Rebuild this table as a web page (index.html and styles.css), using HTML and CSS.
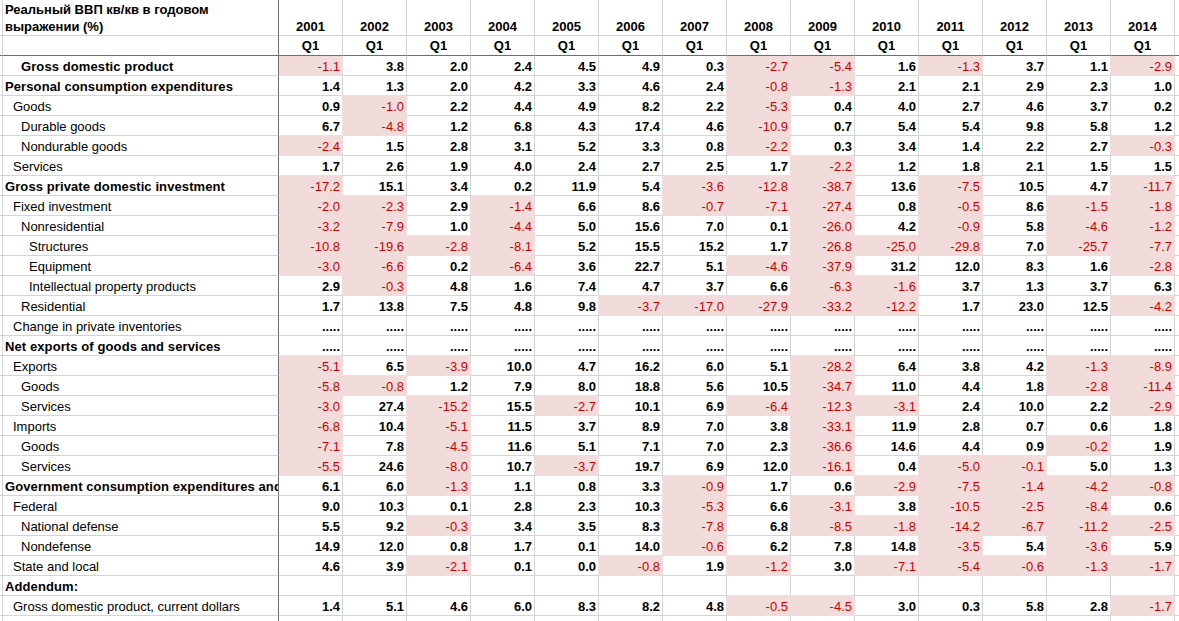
FILE: index.html
```html
<!DOCTYPE html>
<html lang="ru">
<head>
<meta charset="utf-8">
<title>Реальный ВВП</title>
<link rel="stylesheet" href="styles.css">
</head>
<body>
<table class="sheet">
<colgroup>
<col class="c-edge"><col class="c-label">
<col class="c-num"><col class="c-num"><col class="c-num"><col class="c-num"><col class="c-num"><col class="c-num"><col class="c-num">
<col class="c-num"><col class="c-num"><col class="c-num"><col class="c-num"><col class="c-num"><col class="c-num"><col class="c-num">
<col class="c-extra">
</colgroup>
<tr class="h1"><td class="e"></td><td class="l title">Реальный ВВП кв/кв в годовом<br>выражении (%)</td><td>2001</td><td>2002</td><td>2003</td><td>2004</td><td>2005</td><td>2006</td><td>2007</td><td>2008</td><td>2009</td><td>2010</td><td>2011</td><td>2012</td><td>2013</td><td>2014</td><td class="x"></td></tr>
<tr class="h2"><td class="e"></td><td class="l"></td><td>Q1</td><td>Q1</td><td>Q1</td><td>Q1</td><td>Q1</td><td>Q1</td><td>Q1</td><td>Q1</td><td>Q1</td><td>Q1</td><td>Q1</td><td>Q1</td><td>Q1</td><td>Q1</td><td class="x"></td></tr>
<tr class="first"><td class="e"></td><td class="l i2 b">Gross domestic product</td><td class="n">-1.1</td><td>3.8</td><td>2.0</td><td>2.4</td><td>4.5</td><td>4.9</td><td>0.3</td><td class="n">-2.7</td><td class="n">-5.4</td><td>1.6</td><td class="n">-1.3</td><td>3.7</td><td>1.1</td><td class="n">-2.9</td><td class="x"></td></tr>
<tr><td class="e"></td><td class="l i0 b">Personal consumption expenditures</td><td>1.4</td><td>1.3</td><td>2.0</td><td>4.2</td><td>3.3</td><td>4.6</td><td>2.4</td><td class="n">-0.8</td><td class="n">-1.3</td><td>2.1</td><td>2.1</td><td>2.9</td><td>2.3</td><td>1.0</td><td class="x"></td></tr>
<tr><td class="e"></td><td class="l i1">Goods</td><td>0.9</td><td class="n">-1.0</td><td>2.2</td><td>4.4</td><td>4.9</td><td>8.2</td><td>2.2</td><td class="n">-5.3</td><td>0.4</td><td>4.0</td><td>2.7</td><td>4.6</td><td>3.7</td><td>0.2</td><td class="x"></td></tr>
<tr><td class="e"></td><td class="l i2">Durable goods</td><td>6.7</td><td class="n">-4.8</td><td>1.2</td><td>6.8</td><td>4.3</td><td>17.4</td><td>4.6</td><td class="n">-10.9</td><td>0.7</td><td>5.4</td><td>5.4</td><td>9.8</td><td>5.8</td><td>1.2</td><td class="x"></td></tr>
<tr><td class="e"></td><td class="l i2">Nondurable goods</td><td class="n">-2.4</td><td>1.5</td><td>2.8</td><td>3.1</td><td>5.2</td><td>3.3</td><td>0.8</td><td class="n">-2.2</td><td>0.3</td><td>3.4</td><td>1.4</td><td>2.2</td><td>2.7</td><td class="n">-0.3</td><td class="x"></td></tr>
<tr><td class="e"></td><td class="l i1">Services</td><td>1.7</td><td>2.6</td><td>1.9</td><td>4.0</td><td>2.4</td><td>2.7</td><td>2.5</td><td>1.7</td><td class="n">-2.2</td><td>1.2</td><td>1.8</td><td>2.1</td><td>1.5</td><td>1.5</td><td class="x"></td></tr>
<tr><td class="e"></td><td class="l i0 b">Gross private domestic investment</td><td class="n">-17.2</td><td>15.1</td><td>3.4</td><td>0.2</td><td>11.9</td><td>5.4</td><td class="n">-3.6</td><td class="n">-12.8</td><td class="n">-38.7</td><td>13.6</td><td class="n">-7.5</td><td>10.5</td><td>4.7</td><td class="n">-11.7</td><td class="x"></td></tr>
<tr><td class="e"></td><td class="l i1">Fixed investment</td><td class="n">-2.0</td><td class="n">-2.3</td><td>2.9</td><td class="n">-1.4</td><td>6.6</td><td>8.6</td><td class="n">-0.7</td><td class="n">-7.1</td><td class="n">-27.4</td><td>0.8</td><td class="n">-0.5</td><td>8.6</td><td class="n">-1.5</td><td class="n">-1.8</td><td class="x"></td></tr>
<tr><td class="e"></td><td class="l i2">Nonresidential</td><td class="n">-3.2</td><td class="n">-7.9</td><td>1.0</td><td class="n">-4.4</td><td>5.0</td><td>15.6</td><td>7.0</td><td>0.1</td><td class="n">-26.0</td><td>4.2</td><td class="n">-0.9</td><td>5.8</td><td class="n">-4.6</td><td class="n">-1.2</td><td class="x"></td></tr>
<tr><td class="e"></td><td class="l i3">Structures</td><td class="n">-10.8</td><td class="n">-19.6</td><td class="n">-2.8</td><td class="n">-8.1</td><td>5.2</td><td>15.5</td><td>15.2</td><td>1.7</td><td class="n">-26.8</td><td class="n">-25.0</td><td class="n">-29.8</td><td>7.0</td><td class="n">-25.7</td><td class="n">-7.7</td><td class="x"></td></tr>
<tr><td class="e"></td><td class="l i3">Equipment</td><td class="n">-3.0</td><td class="n">-6.6</td><td>0.2</td><td class="n">-6.4</td><td>3.6</td><td>22.7</td><td>5.1</td><td class="n">-4.6</td><td class="n">-37.9</td><td>31.2</td><td>12.0</td><td>8.3</td><td>1.6</td><td class="n">-2.8</td><td class="x"></td></tr>
<tr><td class="e"></td><td class="l i3">Intellectual property products</td><td>2.9</td><td class="n">-0.3</td><td>4.8</td><td>1.6</td><td>7.4</td><td>4.7</td><td>3.7</td><td>6.6</td><td class="n">-6.3</td><td class="n">-1.6</td><td>3.7</td><td>1.3</td><td>3.7</td><td>6.3</td><td class="x"></td></tr>
<tr><td class="e"></td><td class="l i2">Residential</td><td>1.7</td><td>13.8</td><td>7.5</td><td>4.8</td><td>9.8</td><td class="n">-3.7</td><td class="n">-17.0</td><td class="n">-27.9</td><td class="n">-33.2</td><td class="n">-12.2</td><td>1.7</td><td>23.0</td><td>12.5</td><td class="n">-4.2</td><td class="x"></td></tr>
<tr><td class="e"></td><td class="l i1">Change in private inventories</td><td>.....</td><td>.....</td><td>.....</td><td>.....</td><td>.....</td><td>.....</td><td>.....</td><td>.....</td><td>.....</td><td>.....</td><td>.....</td><td>.....</td><td>.....</td><td>.....</td><td class="x"></td></tr>
<tr><td class="e"></td><td class="l i0 b">Net exports of goods and services</td><td>.....</td><td>.....</td><td>.....</td><td>.....</td><td>.....</td><td>.....</td><td>.....</td><td>.....</td><td>.....</td><td>.....</td><td>.....</td><td>.....</td><td>.....</td><td>.....</td><td class="x"></td></tr>
<tr><td class="e"></td><td class="l i1">Exports</td><td class="n">-5.1</td><td>6.5</td><td class="n">-3.9</td><td>10.0</td><td>4.7</td><td>16.2</td><td>6.0</td><td>5.1</td><td class="n">-28.2</td><td>6.4</td><td>3.8</td><td>4.2</td><td class="n">-1.3</td><td class="n">-8.9</td><td class="x"></td></tr>
<tr><td class="e"></td><td class="l i2">Goods</td><td class="n">-5.8</td><td class="n">-0.8</td><td>1.2</td><td>7.9</td><td>8.0</td><td>18.8</td><td>5.6</td><td>10.5</td><td class="n">-34.7</td><td>11.0</td><td>4.4</td><td>1.8</td><td class="n">-2.8</td><td class="n">-11.4</td><td class="x"></td></tr>
<tr><td class="e"></td><td class="l i2">Services</td><td class="n">-3.0</td><td>27.4</td><td class="n">-15.2</td><td>15.5</td><td class="n">-2.7</td><td>10.1</td><td>6.9</td><td class="n">-6.4</td><td class="n">-12.3</td><td class="n">-3.1</td><td>2.4</td><td>10.0</td><td>2.2</td><td class="n">-2.9</td><td class="x"></td></tr>
<tr><td class="e"></td><td class="l i1">Imports</td><td class="n">-6.8</td><td>10.4</td><td class="n">-5.1</td><td>11.5</td><td>3.7</td><td>8.9</td><td>7.0</td><td>3.8</td><td class="n">-33.1</td><td>11.9</td><td>2.8</td><td>0.7</td><td>0.6</td><td>1.8</td><td class="x"></td></tr>
<tr><td class="e"></td><td class="l i2">Goods</td><td class="n">-7.1</td><td>7.8</td><td class="n">-4.5</td><td>11.6</td><td>5.1</td><td>7.1</td><td>7.0</td><td>2.3</td><td class="n">-36.6</td><td>14.6</td><td>4.4</td><td>0.9</td><td class="n">-0.2</td><td>1.9</td><td class="x"></td></tr>
<tr><td class="e"></td><td class="l i2">Services</td><td class="n">-5.5</td><td>24.6</td><td class="n">-8.0</td><td>10.7</td><td class="n">-3.7</td><td>19.7</td><td>6.9</td><td>12.0</td><td class="n">-16.1</td><td>0.4</td><td class="n">-5.0</td><td class="n">-0.1</td><td>5.0</td><td>1.3</td><td class="x"></td></tr>
<tr><td class="e"></td><td class="l i0 b">Government consumption expenditures and</td><td>6.1</td><td>6.0</td><td class="n">-1.3</td><td>1.1</td><td>0.8</td><td>3.3</td><td class="n">-0.9</td><td>1.7</td><td>0.6</td><td class="n">-2.9</td><td class="n">-7.5</td><td class="n">-1.4</td><td class="n">-4.2</td><td class="n">-0.8</td><td class="x"></td></tr>
<tr><td class="e"></td><td class="l i1">Federal</td><td>9.0</td><td>10.3</td><td>0.1</td><td>2.8</td><td>2.3</td><td>10.3</td><td class="n">-5.3</td><td>6.6</td><td class="n">-3.1</td><td>3.8</td><td class="n">-10.5</td><td class="n">-2.5</td><td class="n">-8.4</td><td>0.6</td><td class="x"></td></tr>
<tr><td class="e"></td><td class="l i2">National defense</td><td>5.5</td><td>9.2</td><td class="n">-0.3</td><td>3.4</td><td>3.5</td><td>8.3</td><td class="n">-7.8</td><td>6.8</td><td class="n">-8.5</td><td class="n">-1.8</td><td class="n">-14.2</td><td class="n">-6.7</td><td class="n">-11.2</td><td class="n">-2.5</td><td class="x"></td></tr>
<tr><td class="e"></td><td class="l i2">Nondefense</td><td>14.9</td><td>12.0</td><td>0.8</td><td>1.7</td><td>0.1</td><td>14.0</td><td class="n">-0.6</td><td>6.2</td><td>7.8</td><td>14.8</td><td class="n">-3.5</td><td>5.4</td><td class="n">-3.6</td><td>5.9</td><td class="x"></td></tr>
<tr><td class="e"></td><td class="l i1">State and local</td><td>4.6</td><td>3.9</td><td class="n">-2.1</td><td>0.1</td><td>0.0</td><td class="n">-0.8</td><td>1.9</td><td class="n">-1.2</td><td>3.0</td><td class="n">-7.1</td><td class="n">-5.4</td><td class="n">-0.6</td><td class="n">-1.3</td><td class="n">-1.7</td><td class="x"></td></tr>
<tr><td class="e"></td><td class="l i0 b">Addendum:</td><td></td><td></td><td></td><td></td><td></td><td></td><td></td><td></td><td></td><td></td><td></td><td></td><td></td><td></td><td class="x"></td></tr>
<tr><td class="e"></td><td class="l i1">Gross domestic product, current dollars</td><td>1.4</td><td>5.1</td><td>4.6</td><td>6.0</td><td>8.3</td><td>8.2</td><td>4.8</td><td class="n">-0.5</td><td class="n">-4.5</td><td>3.0</td><td>0.3</td><td>5.8</td><td>2.8</td><td class="n">-1.7</td><td class="x"></td></tr>
<tr><td class="e"></td><td class="l"></td><td></td><td></td><td></td><td></td><td></td><td></td><td></td><td></td><td></td><td></td><td></td><td></td><td></td><td></td><td class="x"></td></tr>
</table>
</body>
</html>
```

FILE: styles.css
```css
html, body {
  margin: 0;
  padding: 0;
  background: #ffffff;
  overflow: hidden;
}

.sheet {
  border-collapse: separate;
  border-spacing: 0;
  table-layout: fixed;
  width: 1235px;
  font-family: "Liberation Sans", Arial, sans-serif;
  font-size: 13px;
  color: #000000;
}

.c-edge { width: 2px; }
.c-label { width: 277px; }
.c-num { width: 64px; }
.c-extra { width: 60px; }

.sheet td {
  box-sizing: content-box;
  height: 19px;
  line-height: 17px;
  padding: 0 2px 0 2px;
  border-right: 1px solid #d4d4d4;
  border-bottom: 1px solid #d4d4d4;
  white-space: nowrap;
  overflow: hidden;
  text-align: right;
  font-weight: bold;
  vertical-align: bottom;
}

.sheet td.e {
  padding: 0;
  border-right: none;
}

.sheet td.l {
  border-left: 1px solid #d4d4d4;
  border-right: 1px solid #6e6e6e;
  text-align: left;
  font-weight: normal;
  text-overflow: clip;
}

.sheet td.l.b {
  font-weight: bold;
  letter-spacing: 0.1px;
}

.sheet td.i0 { padding-left: 2px; }
.sheet td.i1 { padding-left: 10px; }
.sheet td.i2 { padding-left: 18px; }
.sheet td.i3 { padding-left: 26px; }

.h1 td {
  height: 35px;
  vertical-align: bottom;
  text-align: center;
}

.h1 td.title {
  text-align: left;
  font-weight: bold;
  line-height: 17px;
  height: 35px;
  padding-bottom: 0;
  white-space: nowrap;
}

.h2 td {
  text-align: center;
  line-height: 19px;
  border-bottom-color: #6e6e6e;
}

.sheet td.n {
  color: #c80000;
  font-weight: normal;
  background: #f2dcdb;
  border-right-color: #f2dcdb;
  border-bottom-color: #f2dcdb;
  box-shadow: -1px -1px 0 0 #f2dcdb;
}

.sheet td.n:nth-child(3) {
  box-shadow: 0 -1px 0 0 #f2dcdb;
}

.first td.n {
  box-shadow: -1px 0 0 0 #f2dcdb;
}

.first td.n:nth-child(3) {
  box-shadow: none;
}

.sheet td.x {
  border-right: none;
}
```
